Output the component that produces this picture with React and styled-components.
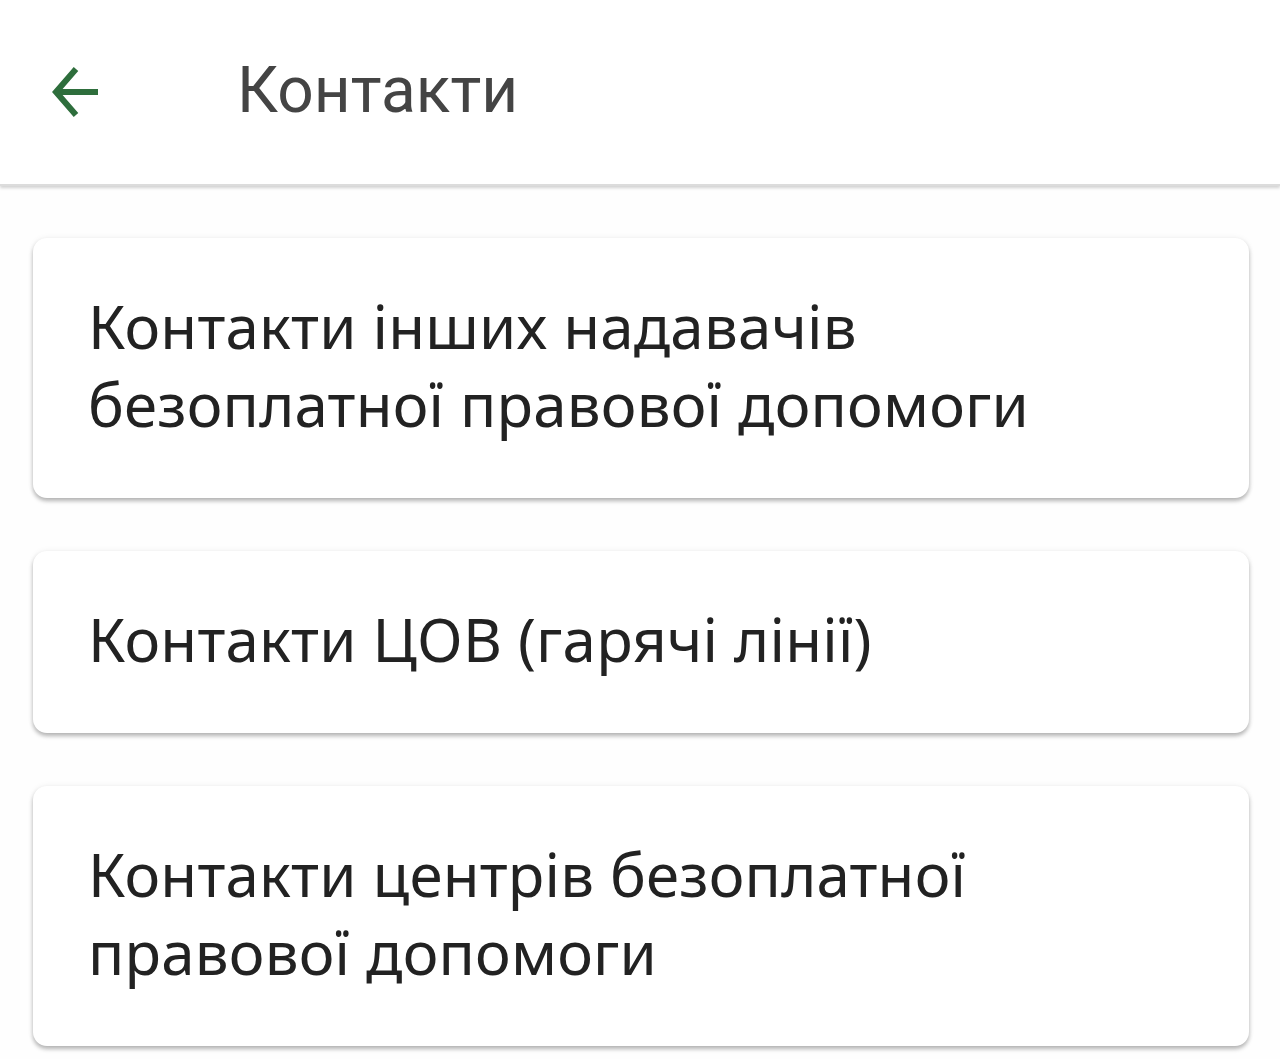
import styled, { createGlobalStyle } from "styled-components";

const Global = createGlobalStyle`
  html, body {
    margin: 0;
    padding: 0;
    background: #ffffff;
  }
  * { box-sizing: border-box; }
`;

const Page = styled.div`
  width: 1280px;
  height: 1059px;
  overflow: hidden;
  background: #fefefe;
  font-family: "Noto Sans", "Open Sans", sans-serif;
`;

const Header = styled.div`
  height: 186px;
  display: flex;
  align-items: center;
  padding-left: 52px;
  background: #ffffff;
  box-shadow: 0 2px 3px rgba(0, 0, 0, 0.18);
  border-bottom: 2px solid #dcdcdc;
`;

const BackButton = styled.button`
  border: none;
  background: none;
  padding: 0;
  width: 46px;
  height: 52px;
  display: flex;
  cursor: pointer;
`;

const Title = styled.div`
  margin-left: 139px;
  font-family: "Roboto", sans-serif;
  font-size: 64px;
  color: #444444;
  line-height: 1;
  margin-top: -2px;
`;

const List = styled.div`
  display: flex;
  flex-direction: column;
  gap: 53px;
  padding: 52px 31px 0 33px;
`;

const Card = styled.div`
  background: #ffffff;
  border-radius: 14px;
  padding: 49px 55px 55px 55px;
  box-shadow: 0 3px 4px rgba(0, 0, 0, 0.28), 0 0 6px rgba(0, 0, 0, 0.06);
  cursor: pointer;
`;

const CardText = styled.div`
  font-size: 60px;
  line-height: 78px;
  color: #222222;
  letter-spacing: 0.2px;
`;

const items = [
  ["Контакти інших надавачів", "безоплатної правової допомоги"],
  ["Контакти ЦОВ (гарячі лінії)"],
  ["Контакти центрів безоплатної", "правової допомоги"],
];

export default function App() {
  return (
    <Page>
      <Global />
      <Header>
        <BackButton>
          <svg width="46" height="52" viewBox="0 0 46 52" fill="none">
            <path d="M5 26H46" stroke="#2e6e3c" strokeWidth="6" />
            <path d="M24 3L4 26L24 49" stroke="#2e6e3c" strokeWidth="6" />
          </svg>
        </BackButton>
        <Title>Контакти</Title>
      </Header>
      <List>
        {items.map((lines, i) => (
          <Card key={i}>
            {lines.map((l) => (
              <CardText key={l}>{l}</CardText>
            ))}
          </Card>
        ))}
      </List>
    </Page>
  );
}
